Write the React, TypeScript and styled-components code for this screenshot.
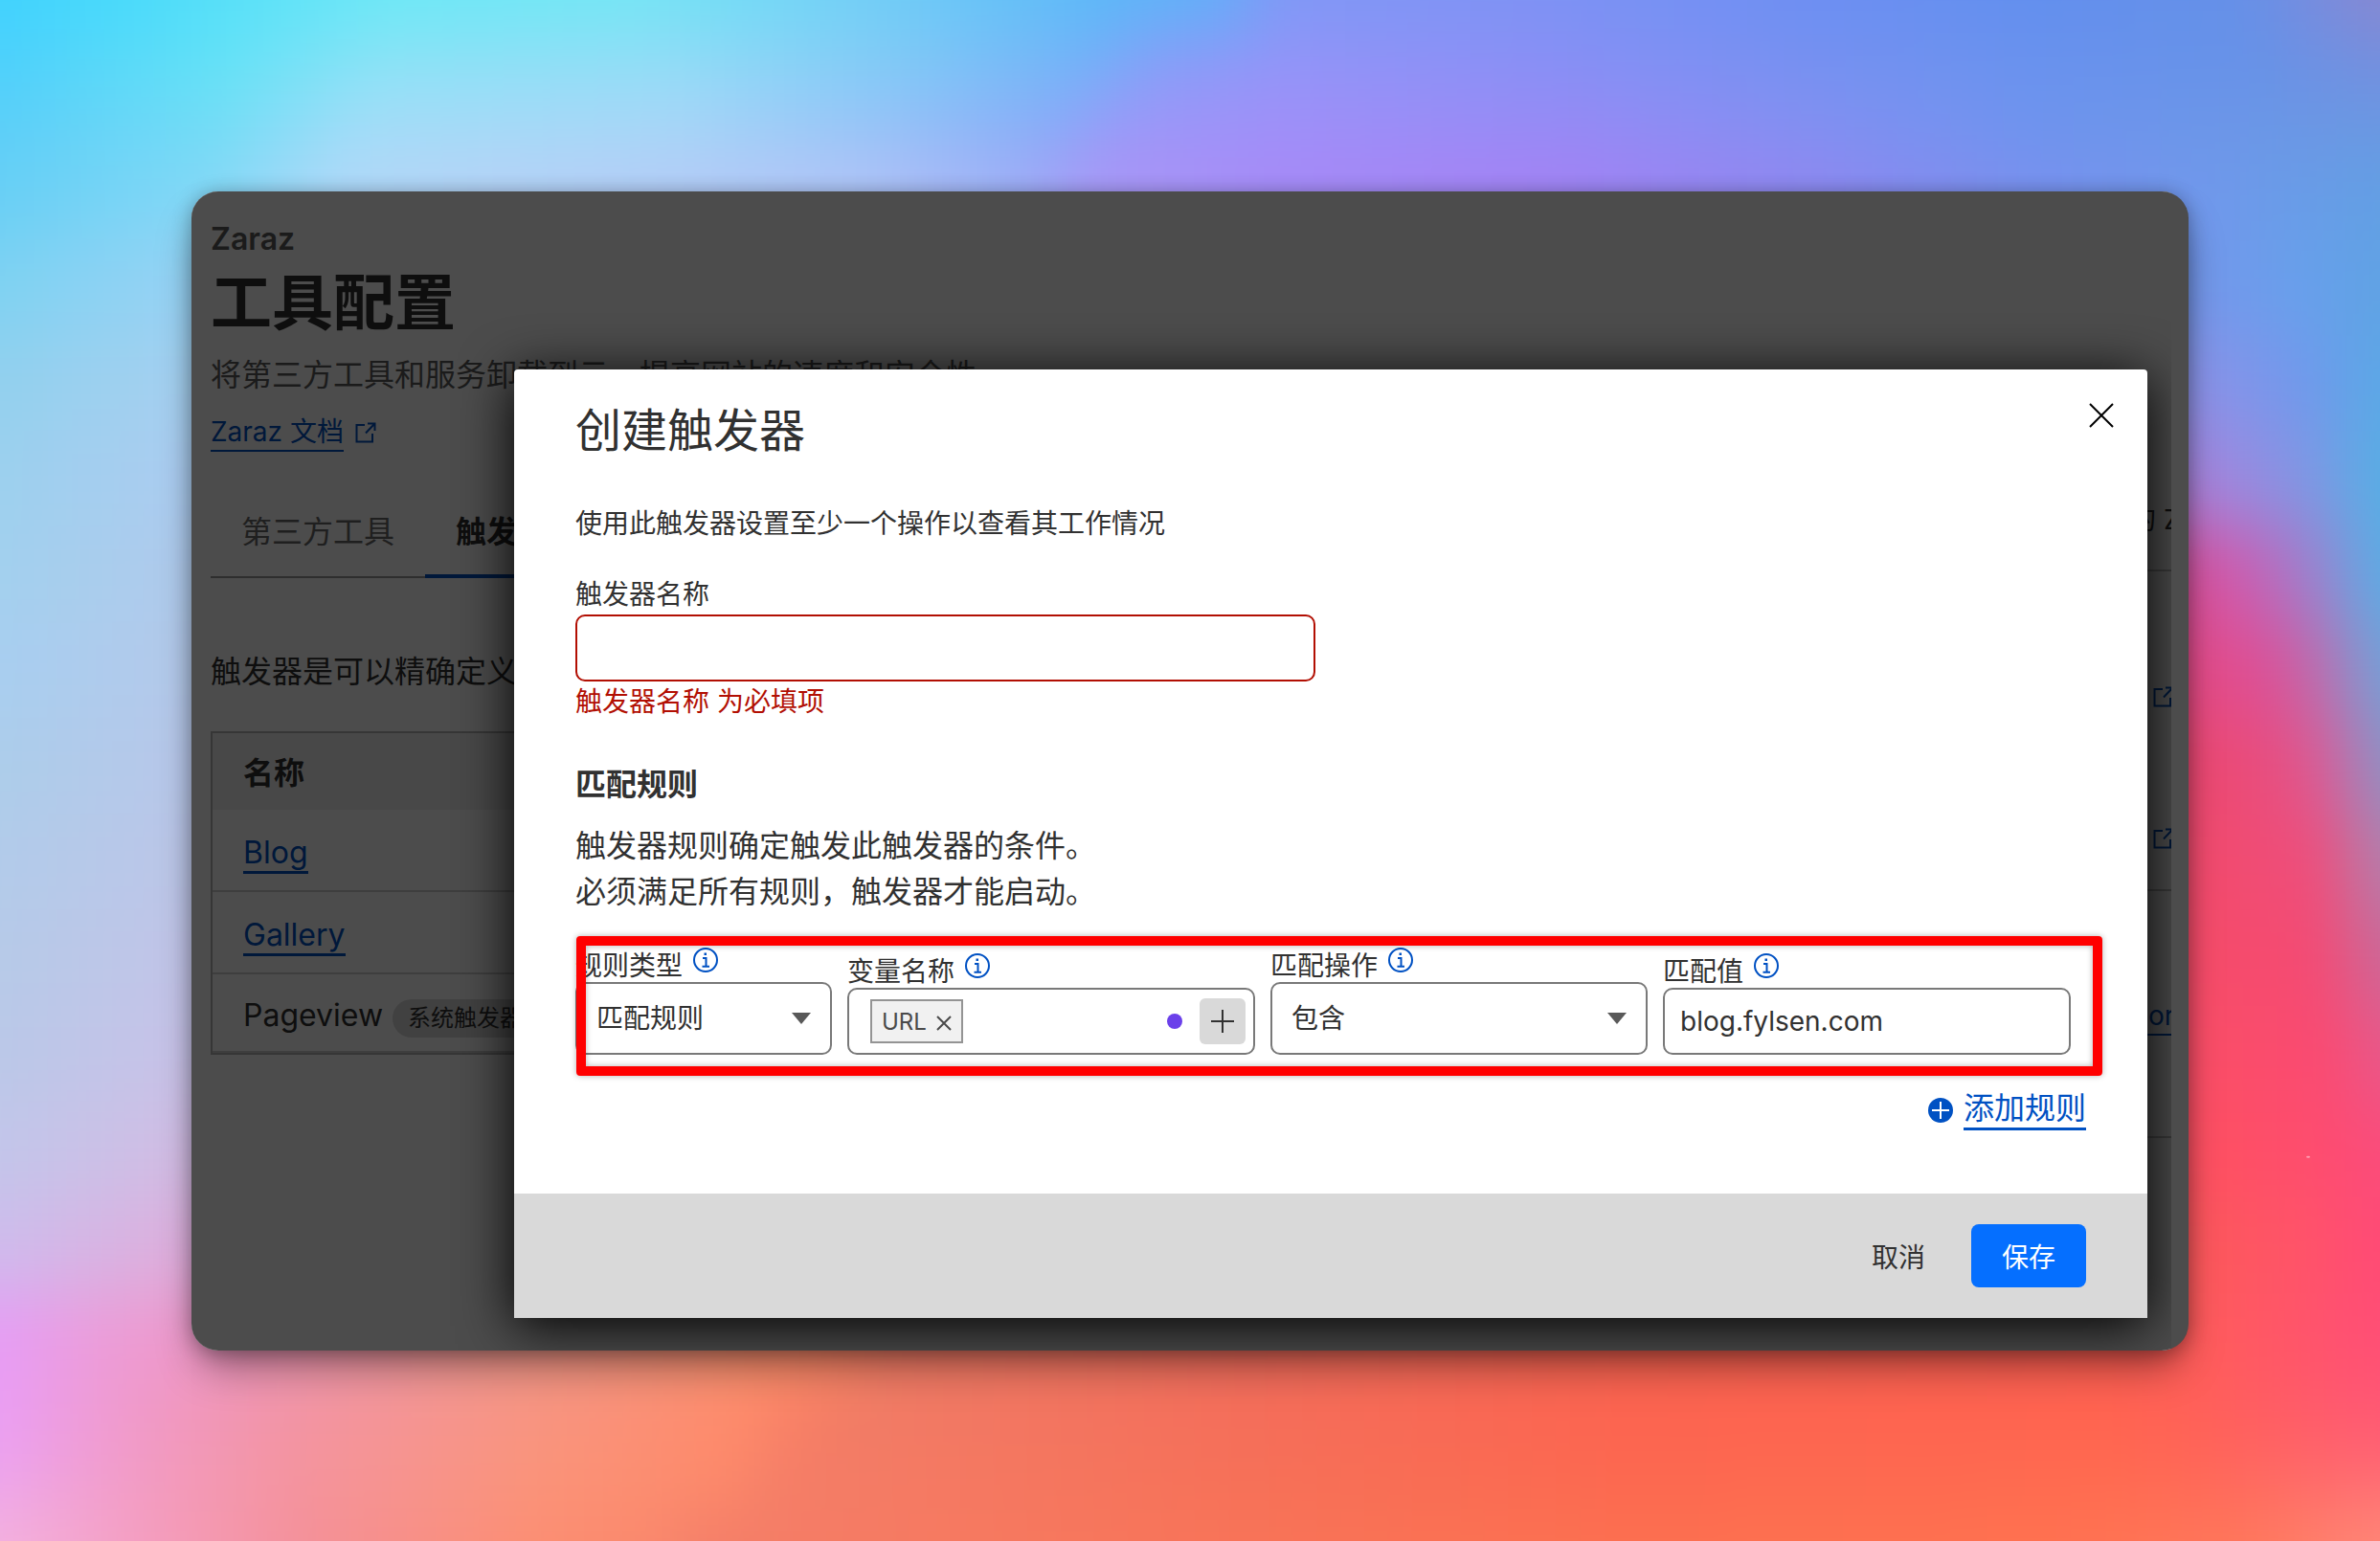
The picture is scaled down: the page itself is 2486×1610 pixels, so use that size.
import React from "react";
import styled, { createGlobalStyle, css } from "styled-components";

const link = "#0051c3";
const ink = "#313131";

const GlobalStyle = createGlobalStyle`
  *, *::before, *::after { box-sizing: border-box; }
  body {
    margin: 0;
    color: ${ink};
    font-family: Inter, "Noto Sans CJK SC", sans-serif;
    font-size: 28px;
  }
  h1, h2, h3, p { margin: 0; }
  button, input, select { font: inherit; color: inherit; margin: 0; }
`;

/* ---------- wallpaper ---------- */

type Stop = [number, string];
const wallpaperRows: { y: number; stops: Stop[] }[] = [
  { y: 0, stops: [[0, "#40d2fe"], [130, "#48dafb"], [400, "#6ce8f6"], [650, "#74e6f5"], [900, "#72cff6"], [1150, "#5cb8f8"], [1270, "#62aef8"], [1340, "#8098f6"], [1600, "#7e92f4"], [1900, "#6c8ff2"], [2120, "#628fee"], [2340, "#6590e8"], [2420, "#788cde"], [2486, "#8888d0"]] },
  { y: 70, stops: [[0, "#4ed0fb"], [230, "#64e2f6"], [400, "#8ee2f6"], [700, "#94dcf6"], [950, "#80c8f6"], [1140, "#74b0f8"], [1210, "#8a9cf8"], [1340, "#9494f8"], [1600, "#8a8ff5"], [1900, "#7691f1"], [2120, "#6a92ee"], [2350, "#6692e8"], [2486, "#7290e0"]] },
  { y: 135, stops: [[0, "#5ccef8"], [230, "#74dcf6"], [380, "#a4dcf8"], [700, "#a8d6f8"], [950, "#94bef8"], [1100, "#88aaf8"], [1170, "#9c98f8"], [1340, "#9f8ff8"], [1650, "#968af5"], [1900, "#8290f2"], [2120, "#6e94ee"], [2486, "#6a98e2"]] },
  { y: 200, stops: [[0, "#68cff5"], [220, "#84d8f6"], [350, "#b2d8f8"], [500, "#b8d2f6"], [900, "#b4c4f6"], [1060, "#a2aef6"], [1140, "#ac96f6"], [1340, "#a888f7"], [1600, "#a680f4"], [1900, "#8f86ef"], [2120, "#7a90ee"], [2300, "#7098ec"], [2486, "#629fe4"]] },
  { y: 300, stops: [[0, "#7fd2f2"], [200, "#98d2f4"], [2290, "#7496ea"], [2400, "#68a0ec"], [2486, "#60a2e4"]] },
  { y: 400, stops: [[0, "#92d0ee"], [200, "#a6d0f0"], [2290, "#8c92e8"], [2400, "#7298ec"], [2486, "#5ba8e6"]] },
  { y: 500, stops: [[0, "#9cd0ee"], [200, "#acccf0"], [2290, "#a883dc"], [2400, "#8494e4"], [2486, "#57aee4"]] },
  { y: 600, stops: [[0, "#a2d0ee"], [200, "#b0caec"], [2290, "#d8509c"], [2350, "#c860b4"], [2420, "#9884d0"], [2486, "#5cace4"]] },
  { y: 700, stops: [[0, "#a8cef0"], [200, "#b4c9ea"], [2290, "#e44a86"], [2370, "#dc5098"], [2430, "#b474b4"], [2486, "#74a0d8"]] },
  { y: 800, stops: [[0, "#accdea"], [200, "#b8c7ea"], [2290, "#ec4870"], [2380, "#e84e80"], [2430, "#d4609c"], [2486, "#9090c4"]] },
  { y: 900, stops: [[0, "#b2cbea"], [200, "#bcc6e8"], [2290, "#f24a6c"], [2420, "#ee4e7c"], [2486, "#b47eac"]] },
  { y: 1000, stops: [[0, "#b6cae8"], [200, "#c2c4e8"], [2290, "#f64c68"], [2420, "#f44a74"], [2486, "#cc6898"]] },
  { y: 1100, stops: [[0, "#bac8e8"], [200, "#c8c2e8"], [2290, "#fa4e66"], [2430, "#fa4a72"], [2486, "#e8588a"]] },
  { y: 1200, stops: [[0, "#c2c6ea"], [200, "#d2bce4"], [2290, "#fe5060"], [2430, "#fe4c70"], [2486, "#fa4c7c"]] },
  { y: 1300, stops: [[0, "#cebcec"], [200, "#deaedc"], [2290, "#fc585a"], [2400, "#ff5468"], [2486, "#ff4a76"]] },
  { y: 1400, stops: [[0, "#e69cf6"], [100, "#ec9cda"], [220, "#ee96c4"], [500, "#f09890"], [780, "#f8906e"], [880, "#fa8664"], [920, "#f07c66"], [1300, "#f26c5c"], [1700, "#f86250"], [2200, "#fe5c52"], [2300, "#ff5c5c"], [2486, "#ff4e76"]] },
  { y: 1480, stops: [[0, "#ea9ef4"], [130, "#f09acc"], [300, "#f294a4"], [560, "#f89480"], [780, "#fe8a6a"], [840, "#f87e64"], [880, "#f07c66"], [1300, "#f46e5a"], [1700, "#fc6450"], [2200, "#ff6450"], [2300, "#ff6058"], [2486, "#ff5874"]] },
  { y: 1540, stops: [[0, "#eca4ee"], [130, "#f29cc8"], [300, "#f494a0"], [560, "#fa947a"], [760, "#fe8a6a"], [810, "#f47e68"], [1300, "#f67058"], [1700, "#fc6850"], [2200, "#ff6a50"], [2300, "#ff6858"], [2486, "#ff6a74"]] },
  { y: 1610, stops: [[0, "#f4b2de"], [130, "#f4a0c4"], [320, "#f49098"], [560, "#fc8e72"], [680, "#fa886c"], [740, "#f47e68"], [1300, "#f87458"], [1700, "#fc7050"], [2150, "#ff7250"], [2350, "#ff785c"], [2486, "#ff8878"]] },
];

const WallpaperSvg = styled.svg`
  position: absolute;
  inset: 0;
  z-index: -1;
  width: 100%;
  height: 100%;
`;

function Wallpaper() {
  return (
    <WallpaperSvg viewBox="0 0 2486 1610" preserveAspectRatio="none" aria-hidden="true">
      <defs>
        {wallpaperRows.map((row) => (
          <linearGradient key={row.y} id={`row-${row.y}`} gradientUnits="userSpaceOnUse" x1="0" x2="2486" y1="0" y2="0">
            {row.stops.map(([x, color]) => (
              <stop key={x} offset={x / 2486} stopColor={color} />
            ))}
          </linearGradient>
        ))}
        <filter id="melt" filterUnits="userSpaceOnUse" x="-300" y="-300" width="3086" height="2210" colorInterpolationFilters="sRGB">
          <feGaussianBlur stdDeviation="24 36" />
        </filter>
      </defs>
      <g filter="url(#melt)">
        {wallpaperRows.map((row, i) => {
          const previous = wallpaperRows[i - 1];
          const next = wallpaperRows[i + 1];
          const top = previous ? (previous.y + row.y) / 2 : -200;
          const bottom = next ? (next.y + row.y) / 2 : 1810;
          return <rect key={row.y} x="-200" y={top} width="2886" height={bottom - top + 1} fill={`url(#row-${row.y})`} />;
        })}
      </g>
      <ellipse cx="2411" cy="1208" rx="2" ry="1" fill="#ffa0b4" />
    </WallpaperSvg>
  );
}

/* ---------- icons ---------- */

const Icon = styled.svg`
  display: block;
  flex: none;
  fill: none;
  stroke: currentColor;
`;

const ExternalIcon = () => (
  <Icon width="22" height="22" viewBox="0 0 22 22" strokeWidth="2" aria-hidden="true">
    <path d="M10 3H1.5v17.500H18V12" />
    <path d="M13 1.500h7.500V9M20 2l-9 9.500" />
  </Icon>
);

const CloseIcon = () => (
  <Icon width="26" height="26" viewBox="0 0 26 26" strokeWidth="2" aria-hidden="true">
    <path d="M1 1l24 24M25 1L1 25" />
  </Icon>
);

const InfoGlyph = styled(Icon)`
  color: ${link};
  margin-bottom: 12px;
`;

const InfoIcon = () => (
  <InfoGlyph width="26" height="26" viewBox="0 0 26 26" strokeWidth="2" aria-hidden="true">
    <circle cx="13" cy="13" r="12" />
    <path d="M10 11h3.500v8.500M9.500 19.800h7.500" />
    <rect x="11.500" y="5.500" width="2.500" height="2.500" fill="currentColor" stroke="none" />
  </InfoGlyph>
);

const AddIcon = () => (
  <Icon width="26" height="26" viewBox="0 0 26 26" strokeWidth="2" aria-hidden="true">
    <circle cx="13" cy="13" r="13" fill="currentColor" stroke="none" />
    <path d="M4 13h18M13 4v18" stroke="#fff" />
  </Icon>
);

/* ---------- scene ---------- */

const Scene = styled.div`
  position: relative;
  z-index: 0;
  display: flex;
  align-items: center;
  min-height: 100vh;
  padding: 200px;
  overflow: hidden;
`;

const AppWindow = styled.div`
  flex: 1;
  min-width: 0;
  display: grid;
  grid-template: minmax(0, 1fr) / minmax(0, 1fr);
  overflow: hidden;
  border-radius: 28px;
  background: #4c4c4c;
  box-shadow: 0 2px 20px rgba(0, 0, 0, 0.3), 0 24px 44px -8px rgba(0, 0, 0, 0.4);
`;

/* ---------- page behind the dialog ---------- */

const Page = styled.div`
  grid-area: 1 / 1;
  min-width: 0;
  margin-right: 18px;
  display: flex;
  gap: 32px;
  padding-left: 20px;
  overflow: hidden;
  background: #fff;
`;

const Main = styled.main`
  flex: 1;
  min-width: 0;
  padding-top: 30px;
`;

const Product = styled.p`
  font-size: 32px;
  line-height: 40px;
  font-weight: 600;
  color: #5a5a5a;
`;

const PageTitle = styled.h1`
  margin-top: 6px;
  font-size: 64px;
  line-height: 80px;
  font-weight: 600;
`;

const Lead = styled.p`
  margin-top: 12px;
  font-size: 32px;
  line-height: 48px;
  color: #5c5c5c;
`;

const DocsLine = styled.div`
  display: flex;
  align-items: center;
  gap: 12px;
  margin-top: 16px;
  color: ${link};
`;

const TextLink = styled.a<{ $large?: boolean }>`
  color: ${link};
  text-decoration: none;
  line-height: 38px;
  font-size: ${(p) => (p.$large ? 32 : 28)}px;
  border-bottom: ${(p) => (p.$large ? 3 : 2)}px solid ${link};
`;

const Tabs = styled.nav`
  display: flex;
  margin-top: 56px;
  border-bottom: 2px solid #9b9b9b;
`;

const Tab = styled.a<{ $active?: boolean }>`
  padding: 4px 32px 20px;
  margin-bottom: -2px;
  font-size: 32px;
  line-height: 48px;
  text-decoration: none;
  color: #6a6a6a;
  border-bottom: 4px solid transparent;
  ${(p) =>
    p.$active &&
    css`
      color: ${ink};
      font-weight: 600;
      border-color: ${link};
    `}
`;

const Explainer = styled.p`
  margin-top: 74px;
  font-size: 32px;
  line-height: 48px;
`;

const TriggerTable = styled.table`
  width: 100%;
  margin-top: 38px;
  border: 2px solid #b4b4b4;
  border-spacing: 0;
  font-size: 32px;
  line-height: 40px;
  th {
    height: 80px;
    padding: 4px 32px 0;
    text-align: left;
    font-weight: 600;
    background: #f0f0f0;
  }
  td {
    height: 86px;
    padding: 8px 32px 0;
    border-bottom: 2px solid #d0d0d0;
  }
  tr:last-child td {
    height: 82px;
  }
`;

const Cell = styled.div`
  display: flex;
  align-items: baseline;
  gap: 10px;
`;

const Pill = styled.span`
  padding: 0 16px;
  border-radius: 20px;
  background: #d9d9d9;
  font-size: 24px;
  line-height: 40px;
`;

const Aside = styled.aside`
  flex: 0 0 50px;
  padding-top: 323px;
  overflow: hidden;
  white-space: nowrap;
  line-height: 40px;
`;

const AsideSection = styled.section<{ $height: number }>`
  height: ${(p) => p.$height}px;
  border-bottom: 2px solid #c4c4c4;
  display: flex;
  flex-direction: column;
  align-items: flex-start;
  color: ${link};
`;

const AsideText = styled.p`
  padding-left: 6px;
  color: ${ink};
`;

const AsideIcons = styled.div`
  display: grid;
  gap: 126px;
  padding: 120px 0 0 31px;
`;

const AsideLink = styled(TextLink)`
  margin-top: 111px;
  padding-left: 26px;
`;

/* ---------- dialog ---------- */

const Scrim = styled.div`
  grid-area: 1 / 1;
  z-index: 1;
  margin-right: 18px;
  padding: 186px 25px 34px 337px;
  overflow: hidden;
  background: rgba(0, 0, 0, 0.7);
`;

const Dialog = styled.section`
  border-radius: 4px 4px 0 0;
  background: #fff;
  box-shadow: 0 8px 56px #000;
`;

const DialogHeader = styled.header`
  display: flex;
  justify-content: space-between;
  align-items: flex-start;
  padding: 16px 16px 0 64px;
`;

const DialogTitle = styled.h2`
  padding-top: 16px;
  font-size: 48px;
  line-height: 64px;
  font-weight: 400;
`;

const CloseButton = styled.button`
  display: grid;
  place-items: center;
  width: 64px;
  height: 64px;
  padding: 0;
  border: 0;
  background: none;
  color: #000;
`;

const DialogBody = styled.form`
  padding: 44px 64px 66px;
`;

const Hint = styled.p`
  line-height: 42px;
`;

const NameField = styled.div`
  display: flex;
  flex-direction: column;
  align-items: flex-start;
  margin-top: 32px;
  line-height: 42px;
`;

const TextInput = styled.input<{ $invalid?: boolean }>`
  width: 100%;
  height: 70px;
  padding: 0 16px;
  border: 2px solid ${(p) => (p.$invalid ? "#b20f03" : "#797979")};
  border-radius: 10px;
  background: #fff;
  outline: none;
`;

const NameInput = styled(TextInput)`
  width: 49%;
`;

const ErrorText = styled.p`
  color: #b20f03;
`;

const SectionTitle = styled.h3`
  margin-top: 42px;
  font-size: 32px;
  line-height: 48px;
  font-weight: 600;
`;

const RuleText = styled.p`
  margin-top: 16px;
  font-size: 32px;
  line-height: 48px;
`;

const RuleRow = styled.div`
  position: relative;
  display: grid;
  grid-template-columns: 268fr 426fr 394fr 426fr;
  align-items: end;
  gap: 16px;
  margin-top: 36px;
  padding-right: 16px;
`;

const Highlight = styled.div`
  position: absolute;
  inset: -14px -17px -22px 1px;
  border: 10px solid #ff0000;
  border-radius: 4px;
  box-shadow: 0 0 6px rgba(0, 0, 0, 0.3), inset 0 0 6px rgba(0, 0, 0, 0.3);
  pointer-events: none;
`;

const Field = styled.div`
  min-width: 0;
`;

const FieldLabel = styled.label`
  display: flex;
  align-items: center;
  gap: 11px;
  height: 34px;
  line-height: 34px;
`;

const SelectBox = styled.div`
  display: grid;
  align-items: center;
  > * {
    grid-area: 1 / 1;
  }
`;

const Select = styled.select`
  appearance: none;
  width: 100%;
  height: 76px;
  padding: 0 20px;
  border: 2px solid #797979;
  border-radius: 10px;
  background: #fff;
`;

const Caret = styled.span`
  justify-self: end;
  margin-right: 22px;
  border: solid transparent;
  border-width: 12px 10px 0;
  border-top-color: #595959;
  pointer-events: none;
`;

const TokenBox = styled.div`
  display: flex;
  align-items: center;
  height: 70px;
  padding: 0 8px 0 22px;
  border: 2px solid #797979;
  border-radius: 10px;
`;

const Token = styled.span`
  display: flex;
  align-items: center;
  gap: 10px;
  height: 46px;
  padding: 0 10px;
  border: 2px solid #949494;
  background: #f1f1f1;
  color: #4a4a4a;
  font-size: 24px;
`;

const TokenRemove = styled.button`
  display: grid;
  padding: 4px 0 0;
  border: 0;
  background: none;
`;

const TokenInput = styled.input`
  flex: 1;
  min-width: 0;
  border: 0;
  background: none;
  outline: none;
`;

const Dot = styled.span`
  width: 16px;
  height: 16px;
  margin-right: 18px;
  border-radius: 50%;
  background: #6b40ea;
`;

const PlusButton = styled.button`
  display: grid;
  place-items: center;
  width: 48px;
  height: 48px;
  padding: 0;
  border: 0;
  border-radius: 6px;
  background: #d9d9d9;
`;

const AddRule = styled.button`
  display: flex;
  align-items: center;
  gap: 11px;
  margin: 36px 0 0 auto;
  padding: 0;
  border: 0;
  background: none;
  color: ${link};
  font-size: 32px;
  line-height: 40px;
`;

const AddRuleText = styled.span`
  border-bottom: 3px solid ${link};
`;

const DialogFooter = styled.footer`
  display: flex;
  justify-content: flex-end;
  gap: 16px;
  padding: 32px 64px;
  background: #d9d9d9;
`;

const ActionButton = styled.button<{ $primary?: boolean }>`
  height: 66px;
  padding: 0 32px;
  border: 0;
  border-radius: 8px;
  background: ${(p) => (p.$primary ? "#056fff" : "transparent")};
  color: ${(p) => (p.$primary ? "#fff" : ink)};
`;

export default function App() {
  return (
    <>
      <GlobalStyle />
      <Scene>
        <Wallpaper />
        <AppWindow>
          <Page>
            <Main>
              <Product>Zaraz</Product>
              <PageTitle>工具配置</PageTitle>
              <Lead>将第三方工具和服务卸载到云，提高网站的速度和安全性。</Lead>
              <DocsLine>
                <TextLink href="#docs">Zaraz 文档</TextLink>
                <ExternalIcon />
              </DocsLine>
              <Tabs>
                <Tab href="#tools">第三方工具</Tab>
                <Tab href="#triggers" $active>触发器</Tab>
              </Tabs>
              <Explainer>触发器是可以精确定义</Explainer>
              <TriggerTable>
                <thead>
                  <tr>
                    <th scope="col">名称</th>
                  </tr>
                </thead>
                <tbody>
                  <tr>
                    <td><Cell><TextLink $large href="#blog">Blog</TextLink></Cell></td>
                  </tr>
                  <tr>
                    <td><Cell><TextLink $large href="#gallery">Gallery</TextLink></Cell></td>
                  </tr>
                  <tr>
                    <td><Cell>Pageview <Pill>系统触发器</Pill></Cell></td>
                  </tr>
                </tbody>
              </TriggerTable>
            </Main>
            <Aside>
              <AsideSection $height={74}>
                <AsideText>的 Z</AsideText>
              </AsideSection>
              <AsideSection $height={334}>
                <AsideIcons>
                  <ExternalIcon />
                  <ExternalIcon />
                </AsideIcons>
              </AsideSection>
              <AsideSection $height={258}>
                <AsideLink href="#monitoring">or</AsideLink>
              </AsideSection>
            </Aside>
          </Page>

          <Scrim>
            <Dialog role="dialog" aria-labelledby="dialog-title">
              <DialogHeader>
                <DialogTitle id="dialog-title">创建触发器</DialogTitle>
                <CloseButton type="button" aria-label="关闭"><CloseIcon /></CloseButton>
              </DialogHeader>
              <DialogBody id="trigger-form">
                <Hint>使用此触发器设置至少一个操作以查看其工作情况</Hint>
                <NameField>
                  <label htmlFor="trigger-name">触发器名称</label>
                  <NameInput id="trigger-name" $invalid aria-invalid="true" aria-describedby="trigger-error" />
                  <ErrorText id="trigger-error">触发器名称 为必填项</ErrorText>
                </NameField>
                <SectionTitle>匹配规则</SectionTitle>
                <RuleText>
                  触发器规则确定触发此触发器的条件。
                  <br />
                  必须满足所有规则，触发器才能启动。
                </RuleText>
                <RuleRow>
                  <Field>
                    <FieldLabel htmlFor="rule-type">规则类型<InfoIcon /></FieldLabel>
                    <SelectBox>
                      <Select id="rule-type"><option>匹配规则</option></Select>
                      <Caret />
                    </SelectBox>
                  </Field>
                  <Field>
                    <FieldLabel htmlFor="variable">变量名称<InfoIcon /></FieldLabel>
                    <TokenBox>
                      <Token>
                        URL
                        <TokenRemove type="button" aria-label="移除 URL">
                          <Icon width="16" height="16" viewBox="0 0 16 16" strokeWidth="2"><path d="M1 1l14 14M15 1L1 15" /></Icon>
                        </TokenRemove>
                      </Token>
                      <TokenInput id="variable" />
                      <Dot />
                      <PlusButton type="button" aria-label="添加变量">
                        <Icon width="24" height="24" viewBox="0 0 24 24" strokeWidth="2"><path d="M0 12h24M12 0v24" /></Icon>
                      </PlusButton>
                    </TokenBox>
                  </Field>
                  <Field>
                    <FieldLabel htmlFor="operation">匹配操作<InfoIcon /></FieldLabel>
                    <SelectBox>
                      <Select id="operation"><option>包含</option></Select>
                      <Caret />
                    </SelectBox>
                  </Field>
                  <Field>
                    <FieldLabel htmlFor="match-value">匹配值<InfoIcon /></FieldLabel>
                    <TextInput id="match-value" defaultValue="blog.fylsen.com" />
                  </Field>
                  <Highlight />
                </RuleRow>
                <AddRule type="button">
                  <AddIcon />
                  <AddRuleText>添加规则</AddRuleText>
                </AddRule>
              </DialogBody>
              <DialogFooter>
                <ActionButton type="button">取消</ActionButton>
                <ActionButton type="submit" form="trigger-form" $primary>保存</ActionButton>
              </DialogFooter>
            </Dialog>
          </Scrim>
        </AppWindow>
      </Scene>
    </>
  );
}
